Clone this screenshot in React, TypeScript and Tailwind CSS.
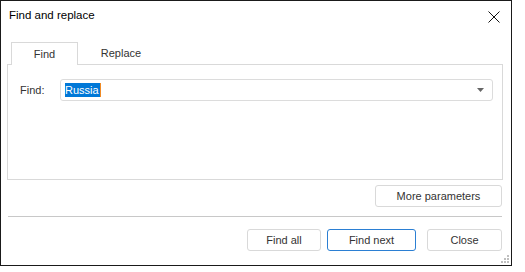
import React from "react";

const font = { fontFamily: '"Liberation Sans", Arial, sans-serif' };

function Button({ children, primary, className = "" }: { children: React.ReactNode; primary?: boolean; className?: string }) {
  return (
    <button
      className={`h-[22px] rounded-[3px] border bg-white text-[11px] leading-none text-[#333] ${
        primary ? "border-[#2b7fd3]" : "border-[#d9d9d9]"
      } ${className}`}
    >
      {children}
    </button>
  );
}

export default function App() {
  return (
    <div className="w-[525px] h-[272px] bg-white" style={font}>
      <div className="relative w-[512px] h-[266px] border border-[#1a1a1a] flex flex-col">
        {/* Title bar */}
        <div className="h-[29px] flex items-center justify-between pl-[8px] pr-[11px]">
          <span className="text-[11.5px] text-black">Find and replace</span>
          <svg width="12" height="12" viewBox="0 0 12 12" className="mt-[2px]">
            <path d="M0.5 0.5 L11.5 11.5 M11.5 0.5 L0.5 11.5" stroke="#111" strokeWidth="1" fill="none" />
          </svg>
        </div>

        {/* Tabs */}
        <div className="mt-[12px] pl-[6px] pr-[8px]">
          <div className="flex h-[22px] pl-[4px]">
            <div className="relative z-10 w-[67px] h-[23px] border border-b-0 border-[#d9d9d9] bg-white flex items-center justify-center text-[11px] text-[#333]">
              Find
            </div>
            <div className="w-[86px] flex items-center justify-center text-[11px] text-[#333]">Replace</div>
          </div>
          <div className="h-[116px] border border-[#d9d9d9] pt-[14px] pl-[12px] pr-[9px]">
            <div className="flex items-center">
              <span className="w-[40px] text-[11px] text-[#333]">Find:</span>
              <div className="flex-1 h-[22px] rounded-[3px] border border-[#dcdcdc] flex items-center pl-[4px] pr-[8px]">
                <span className="flex items-center h-[14px] bg-[#0078d7] text-white text-[11px] leading-none pr-[1px] border-r border-[#f08a24]">
                  Russia
                </span>
                <div className="flex-1" />
                <svg width="7" height="4" viewBox="0 0 7 4">
                  <path d="M0 0 H7 L3.5 4 Z" fill="#666" />
                </svg>
              </div>
            </div>
          </div>
        </div>

        {/* More parameters */}
        <div className="mt-[5px] flex justify-end pr-[9px]">
          <Button className="w-[127px]">More parameters</Button>
        </div>

        {/* Separator */}
        <div className="mt-[9px] ml-[7px] mr-[9px] h-px bg-[#c8c8c8]" />

        {/* Bottom buttons */}
        <div className="mt-[12px] flex justify-end gap-[6px] pr-[9px]">
          <Button className="w-[74px]">Find all</Button>
          <Button primary className="w-[89px] mr-[5px]">Find next</Button>
          <Button className="w-[75px]">Close</Button>
        </div>

        {/* Resize grip */}
        <svg width="9" height="9" viewBox="0 0 9 9" className="absolute right-[2px] bottom-[2px]">
          <rect x="7" y="1" width="2" height="2" fill="#bfbfbf" />
          <rect x="4" y="4" width="2" height="2" fill="#bfbfbf" />
          <rect x="7" y="4" width="2" height="2" fill="#bfbfbf" />
          <rect x="1" y="7" width="2" height="2" fill="#bfbfbf" />
          <rect x="4" y="7" width="2" height="2" fill="#bfbfbf" />
          <rect x="7" y="7" width="2" height="2" fill="#bfbfbf" />
        </svg>
      </div>
    </div>
  );
}
